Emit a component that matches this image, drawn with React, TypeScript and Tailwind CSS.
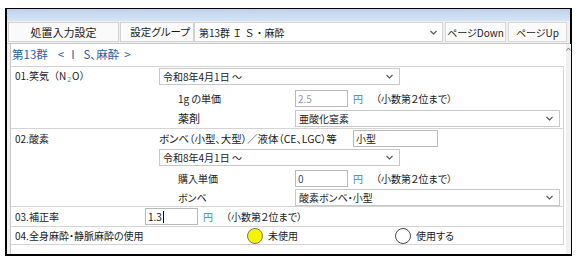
import React from "react";

const Chevron = () => (
  <svg width="7" height="5" viewBox="0 0 7 5" className="shrink-0">
    <polyline points="0.5,1 3.5,4 6.5,1" fill="none" stroke="#555" strokeWidth="1.1" />
  </svg>
);

const Select = ({ text, className }: { text: string; className: string }) => (
  <div
    className={
      "h-[17px] border border-[#c8c8c8] bg-white flex items-center justify-between pl-[3px] pr-[6px] " +
      className
    }
  >
    <span className="leading-none whitespace-nowrap">{text}</span>
    <Chevron />
  </div>
);

const Input = ({ value, className, textClass }: { value: string; className: string; textClass: string }) => (
  <div className={"h-[17px] border border-[#b9b9b9] bg-white flex items-center pl-[2px] " + className}>
    <span className={"leading-none " + textClass}>{value}</span>
  </div>
);

const Yen = () => <span className="text-[#3a86b8] ml-[5px]">円</span>;
const Note = () => <span className="ml-[13px] whitespace-nowrap">（小数第２位まで）</span>;

export default function App() {
  return (
    <div className="w-[579px] h-[262px] bg-white pt-[8px] pl-[5px] font-['Noto_Sans_CJK_JP','Noto_Sans',sans-serif] text-[10px] text-[#1a1a1a] overflow-hidden">
      <div className="w-[567px] h-[248px] border-x-2 border-b-2 border-t border-black flex flex-col bg-[#f0f0f0]">
        {/* title bar */}
        <div className="h-[12px] shrink-0 bg-gradient-to-b from-[#bed2ed] to-[#d6e4f5]" />
        {/* toolbar */}
        <div className="h-[22px] shrink-0 flex items-center pl-[1px]">
          <div className="w-[111px] h-[20px] border border-[#d2d2d2] bg-[#fafafa] flex items-center justify-center text-[11px]">
            処置入力設定
          </div>
          <div className="ml-[1px] w-[74px] h-[20px] border border-[#d2d2d2] bg-[#fafafa] flex items-center justify-end pr-[3px] text-[10.5px] [font-feature-settings:'palt']">
            設定グループ
          </div>
          <div className="w-[249px] h-[20px] border border-[#d2d2d2] bg-white flex items-center justify-between pl-[4px] pr-[5px]">
            <span className="whitespace-nowrap">第13群 Ｉ Ｓ・麻酔</span>
            <Chevron />
          </div>
          <div className="ml-[2px] w-[61px] h-[20px] border border-[#d8d8d8] bg-[#fafafa] flex items-center justify-center whitespace-nowrap [font-feature-settings:'palt']">
            ページDown
          </div>
          <div className="ml-[2px] w-[59px] h-[20px] border border-[#d8d8d8] bg-[#fafafa] flex items-center justify-center whitespace-nowrap [font-feature-settings:'palt']">
            ページUp
          </div>
        </div>
        {/* panel */}
        <div className="flex-1 flex border-t border-[#c9c9c9]">
          <div className="ml-[3px] flex-1 bg-white border-l border-[#c9c9c9] flex">
            <div className="w-[553px] flex flex-col">
              <div className="h-[22px] flex items-center pl-[1px] text-[11.5px] text-[#2a5fa8] whitespace-nowrap">
                <span>第13群</span>
                <span className="ml-[10px]">&lt;</span>
                <span className="ml-[7px]">I</span>
                <span className="ml-[9px]">S</span>
                <span className="[font-feature-settings:'palt']">、麻酔</span>
                <span className="ml-[5px]">&gt;</span>
              </div>
              <div className="border-t border-r border-[#d4d4d4]">
                {/* Row 01 */}
                <div className="flex border-b border-[#d4d4d4]">
                  <div className="w-[148px] pl-[4px] h-[19px] flex items-center">
                    <span>
                      01.笑気（N<span className="text-[7px] text-[#4b8fb0] align-[-2px] mx-[1px]">2</span>O）
                    </span>
                  </div>
                  <div className="flex flex-col pt-[1px] pb-[1px] [font-feature-settings:'palt']">
                    <Select text="令和8年4月1日 ～" className="w-[241px]" />
                    <div className="flex items-center mt-[5px] h-[17px]">
                      <div className="w-[136px] pl-[19px]">1g の単価</div>
                      <Input value="2.5" className="w-[53px]" textClass="text-[#9a9a9a]" />
                      <Yen />
                      <Note />
                    </div>
                    <div className="flex items-center mt-[3px] h-[17px]">
                      <div className="w-[136px] pl-[19px] text-[11px]">薬剤</div>
                      <Select text="亜酸化窒素" className="w-[265px]" />
                    </div>
                  </div>
                </div>
                {/* Row 02 */}
                <div className="flex border-b border-[#d4d4d4]">
                  <div className="w-[148px] pl-[4px] h-[19px] flex items-center">02.酸素</div>
                  <div className="flex flex-col pt-[1px] [font-feature-settings:'palt']">
                    <div className="flex items-center h-[17px]">
                      <span className="w-[194px] whitespace-nowrap text-[10.5px]">ボンベ（小型、大型）／液体（CE、LGC）等</span>
                      <Input value="小型" className="w-[85px]" textClass="" />
                    </div>
                    <Select text="令和8年4月1日 ～" className="w-[241px] mt-[2px]" />
                    <div className="flex items-center mt-[4px] h-[17px]">
                      <div className="w-[136px] pl-[19px]">購入単価</div>
                      <Input value="0" className="w-[53px]" textClass="text-[#2d4f86]" />
                      <Yen />
                      <Note />
                    </div>
                    <div className="flex items-center mt-[2px] h-[17px]">
                      <div className="w-[136px] pl-[19px]">ボンベ</div>
                      <Select text="酸素ボンベ・小型" className="w-[265px]" />
                    </div>
                  </div>
                </div>
                {/* Row 03 */}
                <div className="flex items-center h-[20px] border-b border-[#d4d4d4] [font-feature-settings:'palt']">
                  <div className="w-[134px] pl-[4px]">03.補正率</div>
                  <div className="h-[17px] w-[53px] border border-[#b9b9b9] bg-white flex items-center pl-[2px]">
                    <span className="leading-none">1.3</span>
                    <span className="w-[1px] h-[12px] bg-black ml-[1px]" />
                  </div>
                  <Yen />
                  <Note />
                </div>
                {/* Row 04 */}
                <div className="flex items-center h-[18px] border-b border-[#d4d4d4] [font-feature-settings:'palt']">
                  <div className="w-[236px] pl-[4px] whitespace-nowrap">04.全身麻酔・静脈麻酔の使用</div>
                  <span className="w-[16px] h-[16px] rounded-full bg-[#f7f400] border border-[#7a7a55]" />
                  <span className="ml-[5px] w-[127px]">未使用</span>
                  <span className="w-[16px] h-[16px] rounded-full bg-white border border-[#4a4a4a]" />
                  <span className="ml-[5px]">使用する</span>
                </div>
              </div>
            </div>
            <div className="ml-[2px] w-[5px] bg-[#f0f0f0] flex justify-center pt-[3px]">
              <svg width="5" height="4" viewBox="0 0 5 4">
                <polyline points="0.5,3.5 2.5,1 4.5,3.5" fill="none" stroke="#777" strokeWidth="1" />
              </svg>
            </div>
          </div>
        </div>
      </div>
    </div>
  );
}
